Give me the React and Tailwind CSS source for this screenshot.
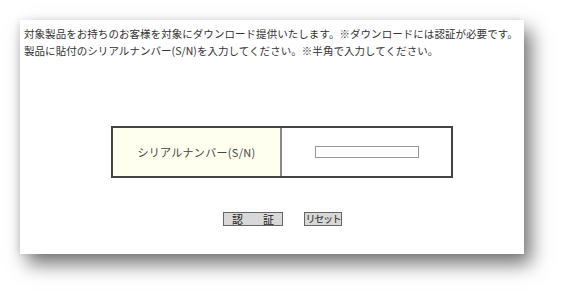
export default function App() {
    return (
        <div
            className="w-[566px] h-[297px] bg-white pl-[20px] pt-[20px]"
            style={{ fontFamily: '"Noto Sans CJK JP", "Noto Sans", sans-serif' }}
        >
            <div className="w-[504px] h-[234px] bg-white shadow-[7px_10px_18px_rgba(0,0,0,0.55),-2px_0_6px_rgba(0,0,0,0.08)] pt-[5px] pl-[4px]">
                {/* intro text */}
                <div className="text-[10.5px] leading-[17px] text-[#333] tracking-[0.05px] whitespace-nowrap">
                    <p>対象製品をお持ちのお客様を対象にダウンロード提供いたします。※ダウンロードには認証が必要です。</p>
                    <p>製品に貼付のシリアルナンバー(S/N)を入力してください。※半角で入力してください。</p>
                </div>

                {/* serial form */}
                <div className="ml-[87px] mt-[67px] w-[342px] h-[52px] border-2 border-[#444] flex">
                    <div className="w-[169px] bg-[#fffff0] border-r-2 border-[#888] flex items-center justify-center text-[11px] text-[#444] tracking-[0.3px]">
                        シリアルナンバー(S/N)
                    </div>
                    <div className="flex-1 flex items-center justify-center">
                        <input
                            type="text"
                            className="w-[104px] h-[12px] border border-[#999] bg-white outline-none"
                        />
                    </div>
                </div>

                {/* buttons */}
                <div className="mt-[34px] flex ml-[199px] gap-[21px]">
                    <button className="w-[60px] h-[14px] p-0 bg-[#d8d8d8] border border-[#666] text-[11px] leading-none text-[#222] flex items-center justify-between px-[8px]">
                        <span>認</span>
                        <span>証</span>
                    </button>
                    <button className="w-[38px] h-[14px] p-0 bg-[#d8d8d8] border border-[#666] text-[10px] leading-none text-[#222] tracking-[-1.2px] whitespace-nowrap flex items-center justify-center">
                        リセット
                    </button>
                </div>
            </div>
        </div>
    );
}
